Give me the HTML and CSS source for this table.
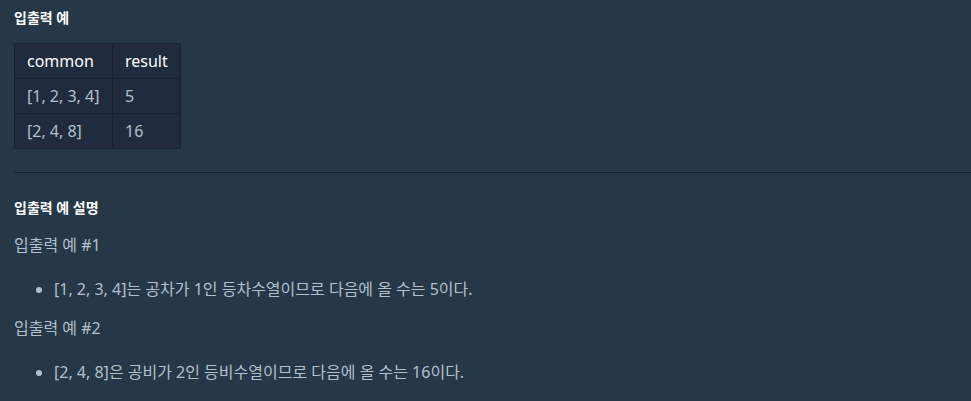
FILE: index.html
```html
<!DOCTYPE html>
<html>
<head>
    <title>입출력 예</title>
    <link rel="stylesheet" href="styles.css">
</head>
<body>
    <div class="guide">
        <h5>입출력 예</h5>
        <table class="examples">
            <thead>
                <tr><th>common</th><th>result</th></tr>
            </thead>
            <tbody>
                <tr><td>[1, 2, 3, 4]</td><td>5</td></tr>
                <tr><td>[2, 4, 8]</td><td>16</td></tr>
            </tbody>
        </table>

        <hr>

        <h5>입출력 예 설명</h5>
        <p>입출력 예 #1</p>
        <ul>
            <li>[1, 2, 3, 4]는 공차가 1인 등차수열이므로 다음에 올 수는 5이다.</li>
        </ul>
        <p>입출력 예 #2</p>
        <ul>
            <li>[2, 4, 8]은 공비가 2인 등비수열이므로 다음에 올 수는 16이다.</li>
        </ul>
    </div>
</body>
</html>
```

FILE: styles.css
```css
body {
    margin: 0;
    background-color: #263747;
    font-family: "Noto Sans", "Noto Sans CJK KR", sans-serif;
    color: #b2c0cc;
}

.guide {
    padding: 8px 0 0 14px;
}

h5 {
    margin: 0;
    font-size: 14px;
    font-weight: 600;
    color: #ffffff;
    line-height: 20px;
}

.examples {
    margin-top: 15px;
    border-collapse: collapse;
    background-color: #202b3d;
    font-size: 16px;
}

.examples th,
.examples td {
    border: 1px solid #172334;
    padding: 0 12px;
    height: 34px;
    text-align: left;
}

.examples th {
    font-weight: normal;
    color: #ffffff;
}

.examples td:first-child,
.examples th:first-child {
    width: 73px;
}

.examples td:last-child,
.examples th:last-child {
    width: 42px;
}

hr {
    margin: 23px 0 25px;
    border: 0;
    border-top: 1px solid #172334;
}

p {
    margin: 15px 0 0;
    font-size: 16px;
    line-height: 24px;
}

ul {
    margin: 20px 0 0;
    padding-left: 40px;
    font-size: 16px;
    line-height: 24px;
}
```
